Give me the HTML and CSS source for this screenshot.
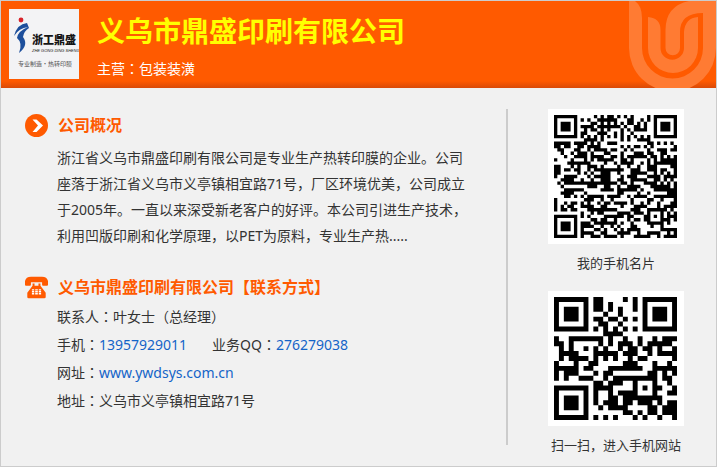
FILE: index.html
```
<!DOCTYPE html>
<html>
<head>
  <meta charset="utf-8">
  <title>义乌市鼎盛印刷有限公司</title>
  <link rel="stylesheet" href="styles.css">
</head>
<body>
  <div class="card">
    <header class="header">
      <svg class="logo" viewBox="0 0 70 70">
        <rect width="70" height="70" fill="#f3f3f5"/>
        <circle cx="12" cy="11" r="2.4" fill="#d8232a"/>
        <path d="M18 14 Q8 15 5 27 Q10 19 19 18 Q9 22 8 29 Q14 34 10 44 Q20 36 14 28 Q15 22 20 19 Z" fill="#1d4f9c"/>
        <text class="logo-name" x="23" y="35">浙工鼎盛</text>
        <text class="logo-latin" x="23" y="43">ZHE GONG DING SHENG</text>
        <text class="logo-slogan" x="9" y="57">专业制造·热转印膜</text>
      </svg>
      <div class="heading">
        <h1>义乌市鼎盛印刷有限公司</h1>
        <p>主营<span class="mid">：</span>包装装潢</p>
      </div>
      <svg class="mark" viewBox="30 1 87 87">
        <path d="M30 1H36Q43 6 43 18V48A30.5 30.5 0 0 0 104 48V13Q81 13 81 32V48A7.25 7.25 0 0 1 66.5 48V30Q66.5 6 90 1H117V48A43.5 43.5 0 0 1 30 48Z"/>
        <path d="M49 17Q61.5 18 61.5 30V48A11.75 11.75 0 0 0 85 48V32Q86 18 99 17V48A25 25 0 0 1 49 48Z"/>
      </svg>
    </header>

    <div class="main">
      <div class="info">
        <section>
          <h2>
            <svg class="icon" viewBox="0 0 23 23">
              <circle cx="11.5" cy="11.5" r="11.5" fill="#ff5a00"/>
              <path d="M7.5 5.5H11.5L18 11.5L11.5 18H7.5L13 11.5Z" fill="#fff"/>
            </svg>
            公司概况
          </h2>
          <p class="about">浙江省义乌市鼎盛印刷有限公司是专业生产热转印膜的企业。公司座落于浙江省义乌市义亭镇相宜路71号，厂区环境优美，公司成立于2005年。一直以来深受新老客户的好评。本公司引进生产技术，利用凹版印刷和化学原理，以PET为原料，专业生产热.....</p>
        </section>

        <section>
          <h2>
            <svg class="icon" viewBox="0 0 70 66">
              <path d="M0 13Q3 0 18 0H52Q67 0 70 13V25Q70 28 67 28H55Q52 28 52 25V17H18V25Q18 28 15 28H3Q0 28 0 25Z" fill="#ff5a00"/>
              <path d="M23 21H29V28H41V21H47V28L63 49V62Q63 66 59 66H11Q7 66 7 62V49L23 28Z" fill="#ff5a00"/>
              <path d="M21 38h7v4h-7zM31 38h8v4h-8zM42 38h7v4h-7zM21 44h7v4h-7zM31 44h8v4h-8zM42 44h7v4h-7zM21 50h7v4h-7zM31 50h8v4h-8zM42 50h7v4h-7z" fill="#fff"/>
            </svg>
            义乌市鼎盛印刷有限公司【联系方式】
          </h2>
          <ul class="contact">
            <li>联系人<span class="mid">：</span>叶女士（总经理）</li>
            <li>手机<span class="mid">：</span><a href="tel:13957929011">13957929011</a><span class="qq">业务QQ<span class="mid">：</span><a href="#qq">276279038</a></span></li>
            <li>网址<span class="mid">：</span><a href="http://www.ywdsys.com.cn">www.ywdsys.com.cn</a></li>
            <li>地址<span class="mid">：</span>义乌市义亭镇相宜路71号</li>
          </ul>
        </section>
      </div>

      <aside class="codes">
        <figure>
          <svg class="qr" id="qrCard"></svg>
          <figcaption>我的手机名片</figcaption>
        </figure>
        <figure>
          <svg class="qr" id="qrSite"></svg>
          <figcaption>扫一扫，进入手机网站</figcaption>
        </figure>
      </aside>
    </div>
  </div>

  <script src="qr.js"></script>
</body>
</html>
```
FILE: styles.css
```
body {
  margin: 0;
  font-family: "Noto Sans", "Noto Sans CJK SC", sans-serif;
  font-size: 14px;
  color: #333;
  background: #fff;
}
h1, h2, p, ul, figure {
  margin: 0;
  padding: 0;
}
a {
  color: #1464c8;
  text-decoration: none;
}
a:hover {
  text-decoration: underline;
}
/* colon that sits in the middle of its square */
.mid {
  font-family: "Noto Sans CJK TC", sans-serif;
  line-height: 1;
}
.card {
  margin: 0 1px 1px 0;
  border: 1px solid #ccc;
  background: #f1f1f1;
}
.header {
  display: flex;
  padding-left: 8px;
  color: #fff;
  background: linear-gradient(#ff5a00 92%, #d94a08);
}
.logo {
  width: 70px;
  height: 70px;
  margin: 8px 0;
}
.logo-name {
  font: 900 11px "Noto Sans CJK SC", sans-serif;
  fill: #151515;
}
.logo-latin {
  font: italic 4px "Liberation Sans", sans-serif;
  fill: #222;
}
.logo-slogan {
  font: 6px "Noto Sans CJK SC", sans-serif;
  fill: #555;
}
.heading {
  flex: 1;
  padding: 10px 0 0 18px;
}
.heading h1 {
  font-size: 28px;
  line-height: 40px;
  color: #ff0;
}
.heading p {
  margin-top: 8px;
  line-height: 20px;
}
.mark {
  width: 87px;
  height: 87px;
  fill: #ff7b33;
}
.main {
  display: flex;
  padding: 21px 32px 1px 24px;
}
.info {
  flex: 1;
  margin-bottom: 20px;
  padding-right: 36px;
  border-right: 2px solid #ccc;
}
.info h2 {
  display: flex;
  align-items: center;
  gap: 10px;
  font-size: 16px;
  line-height: 32px;
  color: #ff5a00;
}
.icon {
  width: 23px;
  height: 23px;
}
.about {
  padding: 4px 0 22px 32px;
  line-height: 26px;
}
.contact {
  padding-left: 32px;
  list-style: none;
  line-height: 28px;
}
.qq {
  margin-left: 25px;
}
.codes {
  display: flex;
  flex-direction: column;
  gap: 8px;
  padding-left: 40px;
}
.codes figure {
  text-align: center;
}
.qr {
  display: block;
  width: 123px;
  height: 123px;
  padding: 6px 7px 6px 6px;
  background: #fff;
}
.codes figcaption {
  font-size: 13px;
  line-height: 39px;
}
```
FILE: qr.js
```
// GF(256) tables
const EXP = [];
const LOG = [];
for (let i = 0, x = 1; i < 255; i++) {
  EXP[i] = x;
  LOG[x] = i;
  x <<= 1;
  if (x & 256) x ^= 0x11d;
}
const mul = (a, b) => (a && b ? EXP[(LOG[a] + LOG[b]) % 255] : 0);

// Reed-Solomon remainder
function ecc(data, n) {
  let gen = [1];
  for (let i = 0; i < n; i++) {
    const next = gen.concat(0);
    gen.forEach((g, j) => { next[j + 1] ^= mul(g, EXP[i]); });
    gen = next;
  }
  const rem = data.concat(new Array(n).fill(0));
  for (let i = 0; i < data.length; i++) {
    const f = rem[i];
    gen.forEach((g, j) => { rem[i + j] ^= mul(g, f); });
  }
  return rem.slice(data.length);
}

const MASKS = [
  (r, c) => (r + c) % 2,
  (r, c) => r % 2,
  (r, c) => c % 3,
  (r, c) => (r + c) % 3,
  (r, c) => ((r >> 1) + Math.floor(c / 3)) % 2,
  (r, c) => (r * c) % 2 + (r * c) % 3,
  (r, c) => ((r * c) % 2 + (r * c) % 3) % 2,
  (r, c) => ((r + c) % 2 + (r * c) % 3) % 2
];

// Single-block byte mode codes only, enough for versions 2-M and 5-L
function drawQr(id, text, opt) {
  const size = 17 + 4 * opt.version;
  const bytes = [...new TextEncoder().encode(text)];
  let bits = '0100' + bytes.length.toString(2).padStart(8, '0');
  bytes.forEach(b => { bits += b.toString(2).padStart(8, '0'); });
  bits += '0000';
  const data = bits.match(/.{8}/g).map(b => parseInt(b, 2));
  for (let pad = 0xec; data.length < opt.data; pad ^= 0xec ^ 0x11) data.push(pad);
  const stream = data.concat(ecc(data, opt.ecc))
    .map(b => b.toString(2).padStart(8, '0')).join('');

  const m = Array.from({ length: size }, () => new Array(size).fill(null));
  const square = (r0, c0, reach, dark) => {
    for (let r = -reach; r <= reach; r++) {
      for (let c = -reach; c <= reach; c++) {
        if (m[r0 + r] && c0 + c >= 0 && c0 + c < size) {
          m[r0 + r][c0 + c] = dark(Math.max(Math.abs(r), Math.abs(c)));
        }
      }
    }
  };
  // finders, alignment, timing
  [[3, 3], [3, size - 4], [size - 4, 3]].forEach(([r, c]) => {
    square(r, c, 4, d => (d !== 2 && d !== 4 ? 1 : 0));
  });
  square(size - 7, size - 7, 2, d => (d !== 1 ? 1 : 0));
  for (let i = 8; i < size - 8; i++) m[6][i] = m[i][6] = 1 - i % 2;

  // format bits
  const format = opt.level << 3 | opt.mask;
  let rem = format;
  for (let i = 0; i < 10; i++) rem = (rem << 1) ^ ((rem >> 9) * 0x537);
  const word = (format << 10 | rem) ^ 0x5412;
  const bit = i => (word >> i) & 1;
  for (let i = 0; i < 15; i++) {
    const row = i < 6 ? i : i < 8 ? i + 1 : size - 15 + i;
    const col = i < 8 ? size - 1 - i : i < 9 ? 7 : 14 - i;
    m[row][8] = bit(i);
    m[8][col] = bit(i);
  }
  m[size - 8][8] = 1;

  // zigzag data placement
  let k = 0;
  let up = true;
  for (let right = size - 1; right > 0; right -= 2) {
    if (right === 6) right = 5;
    for (let n = 0; n < size; n++) {
      const r = up ? size - 1 - n : n;
      for (const c of [right, right - 1]) {
        if (m[r][c] === null) {
          m[r][c] = Number(stream[k++] || 0) ^ (MASKS[opt.mask](r, c) ? 0 : 1);
        }
      }
    }
    up = !up;
  }

  let d = '';
  m.forEach((line, r) => line.forEach((v, c) => { if (v) d += `M${c} ${r}h1v1h-1z`; }));
  const svg = document.getElementById(id);
  svg.setAttribute('viewBox', `0 0 ${size} ${size}`);
  svg.innerHTML = `<path d="${d}"/>`;
}

drawQr('qrCard', 'MECARD:N:叶女士;ADR:浙江省义乌市义亭镇相宜路71号;TEL:13957929011;URL:www.ywdsys.com.cn;;',
  { version: 5, data: 108, ecc: 26, level: 1, mask: 2 });
drawQr('qrSite', 'http://www.ywdsys.com.cn/',
  { version: 2, data: 28, ecc: 16, level: 0, mask: 6 });
```
